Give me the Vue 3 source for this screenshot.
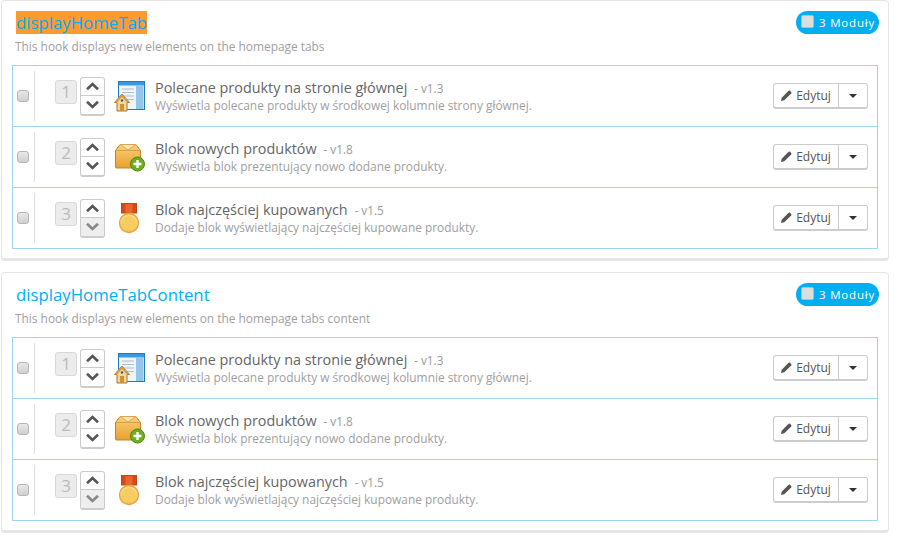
<script setup>
const rows = [
  { n: 1, icon: 'home', name: 'Polecane produkty na stronie głównej', v: 'v1.3', desc: 'Wyświetla polecane produkty w środkowej kolumnie strony głównej.', down: true },
  { n: 2, icon: 'box', name: 'Blok nowych produktów', v: 'v1.8', desc: 'Wyświetla blok prezentujący nowo dodane produkty.', down: true },
  { n: 3, icon: 'medal', name: 'Blok najczęściej kupowanych', v: 'v1.5', desc: 'Dodaje blok wyświetlający najczęściej kupowane produkty.', down: false },
]
const hooks = [
  { id: 'a', title: 'displayHomeTab', mark: true, desc: 'This hook displays new elements on the homepage tabs' },
  { id: 'b', title: 'displayHomeTabContent', mark: false, desc: 'This hook displays new elements on the homepage tabs content' },
]
</script>

<template>
  <div class="page">
    <section v-for="h in hooks" :key="h.id" class="panel">
      <header class="head">
        <h3 class="title" :class="{ mark: h.mark }">{{ h.title }}</h3>
        <span class="badge"><i class="badge-check"></i>3 Moduły</span>
      </header>
      <p class="hook-desc">{{ h.desc }}</p>
      <ul class="list">
        <li v-for="r in rows" :key="r.n" class="row">
          <span class="check"></span>
          <span class="sep"></span>
          <span class="pos">{{ r.n }}</span>
          <span class="arrows">
            <span class="arrow">
              <svg width="15" height="9" viewBox="0 0 15 9"><path d="M2 7.200 7.500 2 13 7.200" fill="none" stroke="#555" stroke-width="2.600"/></svg>
            </span>
            <span class="arrow" :class="{ off: !r.down }">
              <svg width="15" height="9" viewBox="0 0 15 9"><path d="M2 1.800 7.500 7 13 1.800" fill="none" stroke="#555" stroke-width="2.600"/></svg>
            </span>
          </span>
          <span class="icon">
            <svg v-if="r.icon === 'home'" width="32" height="32" viewBox="0 0 32 32">
              <rect x="4.500" y="1.500" width="26" height="28" fill="#f0f5fa" stroke="#1c7dbd"/>
              <rect x="5" y="2" width="25" height="3.500" fill="#3a9ad9"/>
              <rect x="22" y="6" width="7.500" height="23" fill="#8cc8ee"/>
              <path d="M8 9h12M8 12.500h12M8 16h12M8 19.500h12M23 9h6M23 13h6M23 17h6M23 21h6M23 25h6" stroke="#a9bfd2" stroke-width="1.100"/>
              <path d="M8 14 .5 22.500h2.500v8.500h10v-8.500h2.500z" fill="#f0d79a" stroke="#a8742a"/>
              <path d="M8 14 .5 22.500h2.500L8 17l5 5.500h2.500z" fill="#d99a45"/>
              <rect x="6" y="24" width="4" height="7" fill="#d98f2b"/>
              <circle cx="8" cy="20.500" r="1.200" fill="#2a5fa8"/>
            </svg>
            <svg v-else-if="r.icon === 'box'" width="32" height="32" viewBox="0 0 32 32">
              <defs>
                <linearGradient :id="'bx' + h.id" x1="0" y1="0" x2="0" y2="1">
                  <stop offset="0" stop-color="#fbd27a"/>
                  <stop offset="1" stop-color="#e89f2e"/>
                </linearGradient>
              </defs>
              <path d="M1.500 9.500 6 3.500h16l4.500 6V26a1 1 0 0 1-1 1h-23a1 1 0 0 1-1-1z" :fill="'url(#bx' + h.id + ')'" stroke="#c4842a"/>
              <path d="M2 9.500h24" stroke="#d9a24a"/>
              <path d="M6 3.500 14 9l8-5.500z" fill="#f9e1ab" stroke="#d9a24a" stroke-width=".8"/>
              <circle cx="23.500" cy="23" r="7" fill="#6cb01e" stroke="#4d8a10"/>
              <path d="M23.500 19v8M19.500 23h8" stroke="#fff" stroke-width="2.400"/>
            </svg>
            <svg v-else width="32" height="32" viewBox="0 0 32 32">
              <defs>
                <linearGradient :id="'md' + h.id" x1="0" y1="0" x2="0" y2="1">
                  <stop offset="0" stop-color="#fbe08c"/>
                  <stop offset="1" stop-color="#f5c253"/>
                </linearGradient>
              </defs>
              <rect x="7.500" y="1.500" width="15" height="9.500" fill="#d44a1c" stroke="#bf4716"/>
              <rect x="11.500" y="2" width="7" height="9" fill="#e8662c"/>
              <circle cx="15" cy="21" r="9.500" :fill="'url(#md' + h.id + ')'" stroke="#e6a23a" stroke-width="1.300"/>
              <circle cx="15" cy="21" r="7" fill="#f7cc60"/>
            </svg>
          </span>
          <div class="info">
            <div class="name">{{ r.name }} <small class="ver">- {{ r.v }}</small></div>
            <div class="desc">{{ r.desc }}</div>
          </div>
          <div class="btns">
            <span class="btn edit">
              <svg width="11" height="11" viewBox="0 0 11 11"><path d="M0 11l.7-3.300L7.600.8a1 1 0 0 1 1.400 0l1.200 1.200a1 1 0 0 1 0 1.400L3.300 10.300z" fill="#555"/></svg>
              Edytuj
            </span>
            <span class="btn caret"><i></i></span>
          </div>
        </li>
      </ul>
    </section>
  </div>
</template>

<style>
html, body { margin: 0; background: #fff; }
</style>

<style scoped>
.page {
  width: 902px;
  height: 538px;
  overflow: hidden;
  padding: 0 13px 0 1px;
  box-sizing: border-box;
  font-family: "Open Sans", sans-serif;
  display: flex;
  flex-direction: column;
  gap: 11px;
}
.panel {
  height: 261px;
  box-sizing: border-box;
  background: #fff;
  border: 1px solid #e6e6e6;
  border-bottom-width: 3px;
  border-radius: 4px;
  padding: 10px 10px 0;
  flex: none;
}
.head {
  display: flex;
  justify-content: space-between;
  align-items: flex-start;
  height: 24px;
}
.title {
  margin: 0 0 0 4px;
  font-size: 16.800px;
  font-weight: 400;
  line-height: 23px;
  color: #00aff0;
}
.mark { background: #ff9a2e; }
.badge {
  display: flex;
  align-items: center;
  height: 23px;
  padding: 0 4px 0 5px;
  box-sizing: border-box;
  margin-right: -1px;
  border-radius: 12px;
  background: #00aff0;
  color: #fff;
  font-size: 11.500px;
  font-weight: 400;
  letter-spacing: .8px;
}
.badge-check {
  width: 11px;
  height: 11px;
  margin: -3px 5px 0 0;
  background: #ddd;
  border: 1px solid #bbb;
  border-radius: 2px;
}
.hook-desc {
  margin: 2px 0 0 3px;
  height: 28px;
  font-size: 11.900px;
  line-height: 18px;
  color: #a0a0a0;
}
.list {
  list-style: none;
  margin: 0;
  padding: 0;
  border: 1px solid #a0d5ee;
  height: 184px;
  box-sizing: border-box;
}
.row {
  height: 61px;
  box-sizing: border-box;
  border-bottom: 1px solid #a0d5ee;
  display: flex;
  align-items: center;
}
.row:last-child { border-bottom: 0; height: 60px; }
.check {
  width: 10px;
  height: 10px;
  margin: 0 0 0 4px;
  background: linear-gradient(#e8e8e8, #cfcfcf);
  border: 1px solid #b5b5b5;
  border-radius: 3px;
  flex: none;
}
.sep {
  width: 1px;
  height: 50px;
  margin-left: 5px;
  background: #ddd;
  flex: none;
}
.pos {
  width: 22px;
  height: 24px;
  margin: 0 0 8px 20px;
  box-sizing: border-box;
  background: #ececec;
  border: 1px solid #d8d8d8;
  border-radius: 3px;
  color: #bbb;
  font-size: 17px;
  line-height: 22px;
  text-align: center;
  flex: none;
}
.arrows {
  display: flex;
  flex-direction: column;
  margin-left: 3px;
  width: 25px;
  height: 39px;
  box-sizing: border-box;
  border: 1px solid #ccc;
  border-bottom-width: 2px;
  border-radius: 3px;
  background: #fff;
  flex: none;
}
.arrow {
  flex: 1;
  display: flex;
  align-items: center;
  justify-content: center;
}
.arrow + .arrow { border-top: 1px solid #ccc; }
.arrow.off { background: #eee; }
.arrow.off svg path { stroke: #888; }
.icon {
  width: 32px;
  height: 32px;
  margin-left: 9px;
  flex: none;
}
.icon svg { display: block; }
.info {
  margin: 0 0 1px 9px;
  flex: 1;
}
.name {
  font-size: 14.400px;
  line-height: 19px;
  color: #666;
}
.ver {
  font-size: 11.800px;
  color: #999;
  margin-left: 3px;
}
.desc {
  font-size: 11.900px;
  line-height: 15px;
  color: #a0a0a0;
}
.btns {
  display: flex;
  margin-right: 9px;
  height: 26px;
  box-sizing: border-box;
  border: 1px solid #ccc;
  border-bottom-width: 2px;
  border-radius: 3px;
  background: #fff;
}
.btn {
  display: flex;
  align-items: center;
  justify-content: center;
  font-size: 12px;
  color: #555;
}
.edit { width: 64px; gap: 4px; border-right: 1px solid #ccc; }
.caret { width: 28px; }
.caret i {
  width: 0;
  height: 0;
  border: 4px solid transparent;
  border-top-color: #333;
  border-bottom: 0;
}
</style>
